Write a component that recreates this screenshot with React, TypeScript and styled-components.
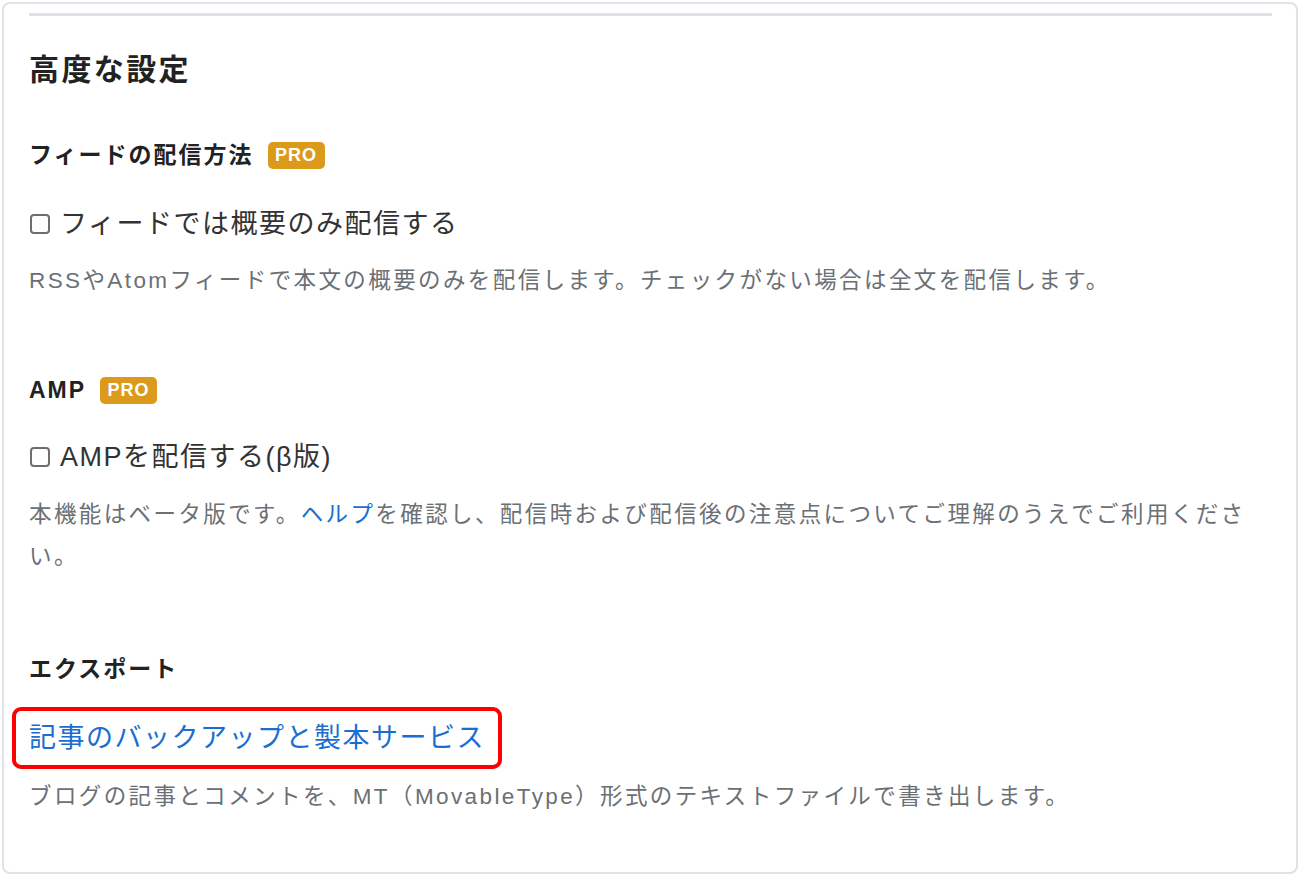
import styled, { createGlobalStyle } from 'styled-components'

const GlobalStyle = createGlobalStyle`
  html, body {
    margin: 0;
    padding: 0;
    background: #ffffff;
  }
  body {
    font-family: "Liberation Sans", "Noto Sans CJK JP", sans-serif;
  }
`

const Frame = styled.div`
  margin: 2px;
  height: 872px;
  box-sizing: border-box;
  border: 2px solid #dfe3e8;
  border-radius: 8px;
  padding: 0 24px 0 25px;
  display: flex;
  flex-direction: column;
  overflow: hidden;
`

const Rule = styled.div`
  margin-top: 9px;
  height: 3px;
  background: #dfe3e8;
`

const Title = styled.h2`
  margin: 34px 0 0;
  font-size: 30px;
  line-height: 40px;
  letter-spacing: 2.4px;
  font-weight: 700;
  color: #222222;
`

const Section = styled.div<{ $gap: number }>`
  margin-top: ${(p) => p.$gap}px;
  display: flex;
  flex-direction: column;
`

const HeadingRow = styled.div`
  display: flex;
  align-items: center;
  gap: 14px;
  height: 30px;
`

const Heading = styled.h3`
  margin: 0;
  font-size: 23px;
  line-height: 30px;
  letter-spacing: 2px;
  font-weight: 700;
  color: #222222;
`

const ProBadge = styled.span`
  display: inline-flex;
  align-items: center;
  justify-content: center;
  width: 57px;
  height: 27px;
  border-radius: 5px;
  background: #dc9a1d;
  color: #ffffff;
  font-size: 18px;
  font-weight: 700;
  letter-spacing: 1px;
`

const CheckRow = styled.label<{ $gap?: number }>`
  margin-top: ${(p) => p.$gap ?? 35}px;
  display: flex;
  align-items: center;
  gap: 10px;
  font-size: 27px;
  line-height: 36px;
  letter-spacing: 1.5px;
  color: #333333;
`

const CheckBox = styled.input.attrs({ type: 'checkbox' })`
  appearance: none;
  margin: 0 0 0 1px;
  width: 20px;
  height: 20px;
  box-sizing: border-box;
  border: 2px solid #6e6e6e;
  border-radius: 4px;
  background: #ffffff;
`

const Description = styled.p<{ $gap?: number }>`
  margin: ${(p) => p.$gap ?? 19}px 0 0;
  font-size: 22.5px;
  line-height: 42px;
  letter-spacing: 2.4px;
  color: #6b7075;
`

const Link = styled.a`
  color: #1a6ed1;
  text-decoration: none;
`

const Highlight = styled.div`
  margin: 23px 0 0 -17px;
  align-self: flex-start;
  padding: 9px 13px;
  border: 4px solid #ff0000;
  border-radius: 9px;
`

const BigLink = styled(Link)`
  display: block;
  font-size: 27px;
  line-height: 36px;
  letter-spacing: 1.5px;
`

export default function App() {
  return (
    <>
      <GlobalStyle />
      <Frame>
        <Rule />
        <Title>高度な設定</Title>

        <Section $gap={50}>
          <HeadingRow>
            <Heading>フィードの配信方法</Heading>
            <ProBadge>PRO</ProBadge>
          </HeadingRow>
          <CheckRow $gap={36}>
            <CheckBox />
            フィードでは概要のみ配信する
          </CheckRow>
          <Description $gap={18}>
            RSSやAtomフィードで本文の概要のみを配信します。チェックがない場合は全文を配信します。
          </Description>
        </Section>

        <Section $gap={73}>
          <HeadingRow>
            <Heading>AMP</Heading>
            <ProBadge>PRO</ProBadge>
          </HeadingRow>
          <CheckRow $gap={34}>
            <CheckBox />
            AMPを配信する(β版)
          </CheckRow>
          <Description>
            本機能はベータ版です。<Link href="#">ヘルプ</Link>
            を確認し、配信時および配信後の注意点についてご理解のうえでご利用ください。
          </Description>
        </Section>

        <Section $gap={76}>
          <HeadingRow>
            <Heading>エクスポート</Heading>
          </HeadingRow>
          <Highlight>
            <BigLink href="#">記事のバックアップと製本サービス</BigLink>
          </Highlight>
          <Description $gap={7}>
            ブログの記事とコメントを、MT（MovableType）形式のテキストファイルで書き出します。
          </Description>
        </Section>
      </Frame>
    </>
  )
}
